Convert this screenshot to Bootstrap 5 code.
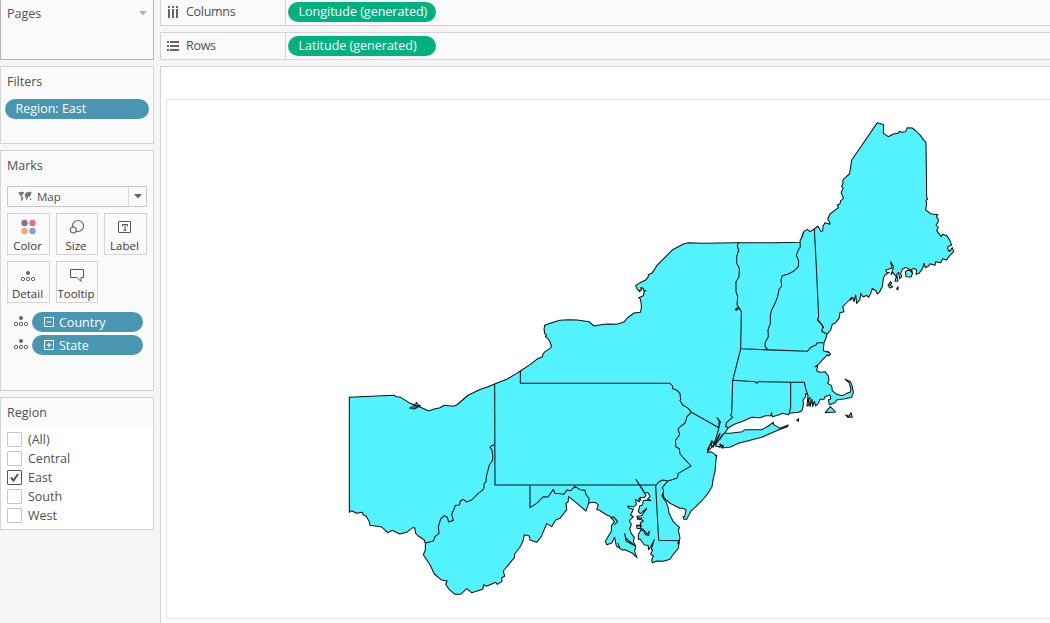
<!DOCTYPE html>
<html lang="en">
<head>
<meta charset="utf-8">
<meta name="viewport" content="width=device-width, initial-scale=1">
<title>Map of the East region</title>
<link href="https://cdn.jsdelivr.net/npm/bootstrap@5.3.0/dist/css/bootstrap.min.css" rel="stylesheet">
<style>
body{font-family:"Open Sans","Liberation Sans",sans-serif;font-size:12.5px;line-height:20px;color:#505050;background:#f5f5f5;width:1050px;height:623px}
.side{width:154px}
.panel{background:#fafafa;border:1px solid #d4d4d4;width:154px}
.panel-title{padding-left:6px;line-height:20px}
.pages{height:60px;border-color:#b4b4b4;border-top:0}
.filters{height:78px}
.marks{height:241px}
.region{height:133px;background:#fff}
.region .panel-title{background:#fafafa;height:29px;padding-top:5px}
.pill{height:20px;border-radius:10px;color:#fff;background:#4996b2;line-height:19px;font-weight:500;white-space:nowrap}
.pill.green{background:#00b180;width:148px;padding-left:10.500px}
.mark-type{margin:0 6px;width:140px;height:21px;border:1px solid #c9c9c9;border-radius:1px;font-size:11.5px;line-height:19px}
.mark-type .arrow{width:18px;height:19px;border-left:1px solid #d9d9d9}
.tiles{display:grid;grid-template-columns:43px 42px 43px;column-gap:6px;row-gap:6px;padding-left:6px}
.tile{height:42px;border:1px solid #d4d4d4;font-size:11.5px;line-height:15px;color:#383838;text-align:center;white-space:nowrap}
.tile svg{display:block;margin:4px auto 0}
.tile span{display:block;margin:0 -3px 0 -5px}
.opt{height:19px;line-height:19px;padding-left:6px}
.box{width:15px;height:15px;border:1px solid #c6c6c6;border-radius:1px;background:#fff}
.box.on{border-color:#555}
.shelf{background:#fafafa;border:1px solid #d4d4d4;border-right:0;height:28px}
.shelf-name{width:125px;border-right:1px solid #d4d4d4;padding-left:6px;letter-spacing:-.3px}
.sheet{background:#fff;border:1px solid #d4d4d4;border-right:0;border-bottom:0;height:557px;padding:32px 0 0 5px}
.view{border:1px solid #e6e6e6;border-right:0;height:520px}
</style>
<script src="https://cdn.jsdelivr.net/npm/bootstrap@5.3.0/dist/js/bootstrap.bundle.min.js"></script>
</head>
<body class="d-flex overflow-hidden">
<svg width="0" height="0" class="position-absolute">
  <symbol id="detail" viewBox="0 0 16 14"><circle cx="8" cy="3" r="2" fill="#666"/><g fill="none" stroke="#666"><circle cx="3" cy="9" r="1.7"/><circle cx="8" cy="9" r="1.7"/><circle cx="13" cy="9" r="1.7"/></g></symbol>
</svg>
<aside class="side d-flex flex-column flex-shrink-0">
  <section class="panel pages d-flex justify-content-between align-items-start pt-1">
    <div class="panel-title">Pages</div>
    <svg width="8" height="5" style="margin:7px 6px 0 0"><path d="M0 0h8L4 4.5z" fill="#b0b0b0"/></svg>
  </section>
  <section class="panel filters" style="margin-top:6px">
    <div class="panel-title" style="padding-top:5px">Filters</div>
    <div class="pill" style="margin:7px 4px 0;padding-left:10.5px">Region: East</div>
  </section>
  <section class="panel marks" style="margin-top:6px">
    <div class="panel-title" style="padding-top:5px">Marks</div>
    <div class="mark-type d-flex align-items-center justify-content-between" style="margin-top:10px">
      <div class="d-flex align-items-center"><svg width="14" height="11" style="margin:0 5px 0 10px"><path d="M0 1.500L3 .8 6 1 5.500 3 4 4l-.5 1.200L5.300 6.500 4.800 8.500 3.800 10.500 3 8 3.200 6 1.500 4.200 1.300 2.700zM7 3L8 1.500 10 1 13.500.8 13.200 3 12.300 5 11.500 6.500 10.500 5 9.800 6.500 9 9 8 8.500 7.800 6.500 6.800 5.500zM12 7.500l1.500.3-.3 1.200H12z" fill="#777"/></svg><span>Map</span></div>
      <div class="arrow d-flex align-items-center justify-content-center"><svg width="8" height="5"><path d="M0 0h8L4 4.5z" fill="#666"/></svg></div>
    </div>
    <div class="tiles" style="margin-top:6px">
      <div class="tile"><svg width="18" height="20"><circle cx="4.500" cy="5" r="3.2" fill="#83709b"/><circle cx="12.500" cy="5" r="3.2" fill="#fb6b80"/><circle cx="4.500" cy="13" r="3.2" fill="#f6a479"/><circle cx="12.500" cy="13" r="3.2" fill="#7ba5cf"/></svg><span>Color</span></div>
      <div class="tile"><svg width="18" height="20" fill="#fafafa" stroke="#666" stroke-width="1.2"><circle cx="10" cy="8" r="5.5"/><circle cx="5.3" cy="12" r="3"/></svg><span>Size</span></div>
      <div class="tile"><svg width="18" height="20" fill="none" stroke="#555"><rect x="1.5" y="3.5" width="12" height="11" rx=".5"/><path d="M5.500 8.500v-2h5v2M8 6.500v6M6.500 12h3"/></svg><span>Label</span></div>
      <div class="tile"><svg width="18" height="20" viewBox="0 0 18 20"><use href="#detail" x="0" y="4" width="16" height="14"/></svg><span>Detail</span></div>
      <div class="tile"><svg width="18" height="20" fill="none" stroke="#555"><path d="M2.500 3.500h13v8h-2.500v4l-4-4H2.500z"/></svg><span>Tooltip</span></div>
    </div>
    <div class="d-flex align-items-center" style="margin:9px 10px 0 12px"><svg width="16" height="14" style="margin-right:3px"><use href="#detail"/></svg><div class="pill d-flex align-items-center flex-grow-1" style="padding-left:12px"><svg width="10" height="10" fill="none" stroke="#fff" style="margin-right:5px"><path d="M.5.500h9v9h-9zM2.500 5h5"/></svg>Country</div></div>
    <div class="d-flex align-items-center" style="margin:3px 10px 0 12px"><svg width="16" height="14" style="margin-right:3px"><use href="#detail"/></svg><div class="pill d-flex align-items-center flex-grow-1" style="padding-left:12px"><svg width="10" height="10" fill="none" stroke="#fff" style="margin-right:5px"><path d="M.5.500h9v9h-9zM2.500 5h5M5 2.500v5"/></svg>State</div></div>
  </section>
  <section class="panel region" style="margin-top:6px">
    <div class="panel-title">Region</div>
    <div style="padding-top:3px">
      <div class="opt d-flex align-items-center gap-2"><i class="box"></i><span style="margin-left:-2px">(All)</span></div>
      <div class="opt d-flex align-items-center gap-2"><i class="box"></i><span style="margin-left:-2px">Central</span></div>
      <div class="opt d-flex align-items-center gap-2"><i class="box on d-flex"><svg width="13" height="13"><path d="M3 6.500l2.500 3L10 3" fill="none" stroke="#555" stroke-width="2"/></svg></i><span style="margin-left:-2px">East</span></div>
      <div class="opt d-flex align-items-center gap-2"><i class="box"></i><span style="margin-left:-2px">South</span></div>
      <div class="opt d-flex align-items-center gap-2"><i class="box"></i><span style="margin-left:-2px">West</span></div>
    </div>
  </section>
</aside>
<main class="flex-grow-1" style="margin-left:6px">
  <div class="shelf d-flex" style="margin-top:-2px">
    <div class="shelf-name d-flex align-items-center"><svg width="12" height="12" fill="#666" style="margin-right:7px"><path d="M1 0h2v2H1zM5 0h2v2H5zM9 0h2v2H9zM1 3h2v9H1zM5 3h2v9H5zM9 3h2v9H9z"/></svg>Columns</div>
    <div class="pill green" style="margin:3px 0 0 2px">Longitude (generated)</div>
  </div>
  <div class="shelf d-flex" style="margin-top:6px">
    <div class="shelf-name d-flex align-items-center"><svg width="12" height="10" fill="#666" style="margin-right:7px"><path d="M0 0h2v2H0zM0 4h2v2H0zM0 8h2v2H0zM3 0h9v2H3zM3 4h9v2H3zM3 8h9v2H3z"/></svg>Rows</div>
    <div class="pill green" style="margin:3px 0 0 2px">Latitude (generated)</div>
  </div>
  <div class="sheet" style="margin-top:6px"><div class="view"><svg id="map" class="d-block" width="883" height="518" viewBox="167 100 883 518" stroke="#101010" stroke-width="1.05" stroke-linejoin="round"></svg></div></div>
</main>
<script>
// Each run of points is [origin x, origin y, "x,y ..."], the points in thirds of a pixel.
const outline = [
 [340,360,"28,112 162,106 170,110 182,112 207,128 222,134 245,143 266,153 280,148 300,143 313,136 340,139 350,135 385,105 400,98 418,89 440,82 464,72 500,58 530,40"],
 [490,230,"91,423 120,404 140,388 157,380 159,372 165,365 183,353 184,348 179,333 170,322 166,321 169,314 163,310 164,304 162,299 164,286 180,280 210,271 235,269 262,270 297,275 305,282 313,288 325,286 342,283 360,282 380,283 392,279 403,275 412,264 432,249 451,247 454,235 454,225 451,207 446,203 460,197 463,185 468,182 462,183 459,174 452,173 455,180 449,181 450,186 443,179 437,167 450,158 468,149 475,140 475,134 485,130 494,118 500,107 548,59 580,42 595,38 640,40 740,38"],
 [720,230,"55,38 165,38 240,37 241,29 247,20 250,7"],
 [800,110,"5,382 10,370 12,364 22,358 30,365 43,357 54,348 62,364 68,363 69,349 75,338 90,343 89,337 83,327 90,312 112,295 115,293 112,285 120,281 122,272 128,268 130,263 124,250 124,245 130,235 125,229 129,220 128,213 133,205 148,192 151,178 155,150 180,114 232,38 251,44 250,70 265,80 280,72 295,70 298,64 304,67 317,65 322,53 337,54 348,63 361,76 370,89 378,97 380,262 383,267 378,271 380,280 377,300 392,311 414,314 409,320 415,328 414,337 408,345 415,352 410,362 424,380 428,373 440,377 448,388 455,405 443,410 444,420 449,424 457,413 461,425 446,440 440,450 428,446 422,458 407,455 405,466 390,461 386,468 376,473 372,460 368,475 357,490 348,493 350,480 342,475 335,478 337,489 330,479 318,472 307,478 302,490 305,500 299,506 296,487 290,493 294,513 285,514 289,500 278,487 273,494 281,470 272,455 276,474 265,478 257,480 262,490 268,487 255,495 250,505 247,530 238,547 232,552 228,543 217,535 213,548 206,562 200,556 190,561 182,550 180,569 170,580 167,555 162,575 158,562 152,571 154,563 148,570 133,585 128,590 132,605 120,608 117,625 105,640 97,643 92,660"],
 [720,230,"321,313 317,327 312,338 310,362"],
 [700,340,"371,32 388,38 384,34 392,42 385,48 381,44 377,50 365,62 357,72 345,80 353,77 350,93 360,97 375,95 385,108 387,120 383,130 395,137 397,152 410,163 428,167 440,160 450,157 453,147 447,128 435,118 452,125 457,140 460,158 455,172 435,176 410,180 405,188 388,194 385,180 392,177 390,165 375,170 372,178 360,178 355,190 347,198 343,184 338,200 336,178 330,200 330,172 325,178 327,195 321,198 324,165 316,161 317,170 309,180 310,195 308,205 305,213 295,217 268,220 265,224 248,220 235,225 217,230 214,218 213,227 197,227 180,233 155,232 130,243 105,252 85,263 72,283 65,286 59,298 51,315 46,313 56,292 60,280 45,308 39,322 33,317 36,307 24,325 22,338 32,335 42,341 50,350"],
 [590,400,"380,165 378,180 375,215 370,235 366,260 354,280 340,297 330,307 318,319 303,333 290,358 282,358 279,350 284,350 288,330 280,325 270,325 256,318 240,310 222,293 218,280 216,288 220,295 228,305 235,325 237,340 250,365 263,378 269,382 265,390 270,415 263,431 268,425 265,445 252,460 240,478 220,484 200,483 187,488 185,480 190,468 182,462 188,450 184,447 193,419 182,440 176,449 174,436 163,435 150,417 145,418 145,404 153,389 163,395 166,404 176,406 178,394 171,402 159,387 141,385 140,375 154,379 151,368 160,363 148,355 143,359 141,349 155,347 170,325 151,341 145,335 149,318 157,315 160,302 171,300 183,302 173,297 180,289 174,278 163,278 138,239 158,268 168,287 162,293 150,292 153,301 147,295 148,306 136,298 139,313 131,321 113,318 115,323 130,328 122,345 130,350 118,362 124,373 119,387 124,400 133,413 130,425 137,438 134,455 141,473 128,460 105,449 97,450 90,445 84,430 90,445 79,438 74,412 65,429 50,434 46,424 64,394 65,376 73,365 62,350 45,342 28,330 20,329 25,314 15,307 0,308"],
 [400,440,"566,190 558,213 532,191 506,170 504,187 498,190 500,209 480,235 467,240 455,260 440,251 434,265 424,290 410,307 390,300 388,288 373,284 370,300 362,318 344,342 343,353 324,376 310,393 314,409 305,413 306,424 292,433 287,427 260,439 251,434 248,448 215,458 200,446 182,463 165,463 147,448 137,433 141,423 123,419 103,402 90,374 70,344 76,330 76,310 73,300 55,288 47,280 44,263 38,263 20,277 0,282"],
 [340,360,"165,515 157,511 143,518 130,505 122,500 90,496 88,485 78,468 69,464 67,457 50,460 35,452 28,457"]
];
const islands = [
 [[700,340,"62,295 72,280 90,280 127,275 135,269 185,269 205,258 220,247 220,253 240,265 265,255 262,260 235,270 185,292 145,302 115,310 92,321 65,324 70,318 60,313 63,321 45,318 52,305"]],
 [[700,340,"376,218 391,200 407,216"]],
 [[700,340,"437,225 447,229 453,218 457,232 443,232"]],
 [[700,340,"290,241 296,236 295,244"]],
 [[800,110,"316,485 328,478 338,490 333,501 318,500"]],
 [[800,110,"264,526 272,515 275,520 270,525 278,530 270,534"]],
 [[800,110,"290,537 294,530 294,539"]],
 [[340,360,"209,144 218,140 233,142 222,147"]],
 [[340,360,"219,134 228,132 229,127 233,134 242,137 231,138"]]
];
const borders = [
 [340,360,"464,72 465,376"],
 [490,230,"91,423 91,460 540,460 548,468 548,476 561,481 570,490 572,510"],
 [400,440,"285,135 767,135"],
 [340,360,"464,254 455,257 450,262 456,270 458,285 458,300 448,315 443,335 439,350 438,365 431,373 433,380 430,388 415,400 395,420 380,426 370,418 361,423 358,435 346,436 341,450 335,463 340,481 326,486 322,472 313,467 302,477 295,500 297,520 285,530 280,543 256,549"],
 [400,440,"390,136 390,203 410,190 430,170 444,171 460,148 465,160 492,163 500,150 512,152 525,139 540,149 555,151 558,164 567,175 566,190"],
 [590,400,"269,0 278,15 295,25 304,37 291,50 285,69 271,80 264,87 269,104 257,120 257,140 268,146 270,162 303,198 265,220 262,234 232,244 216,264 221,270 218,290"],
 [590,400,"304,37 387,83 387,62 381,53 391,65 385,90 379,112 369,137 353,155 365,122 373,130"],
 [590,400,"197,257 206,246 218,240 232,242"],
 [590,400,"197,257 206,421 270,422"],
 [720,230,"55,38 52,48 56,60 50,80 50,100 58,115 57,140 48,155 48,185 53,200 51,225 56,231 46,238 49,241 58,234 64,245 62,356 102,358 262,364 272,352 288,345 292,338 310,338"],
 [720,230,"240,37 241,50 235,60 229,76 236,93 235,110 222,123 205,132 187,137 183,150 185,168 177,178 173,200 167,215 155,240 151,255 151,280 144,300 145,320 136,336 135,350 143,358"],
 [800,110,"43,357 49,470 56,620 52,630 66,644 71,654"],
 [720,230,"293,268 309,290 305,304 321,313"],
 [700,340,"122,27 98,121 95,220 92,226 98,232 80,247 77,259 84,263"],
 [700,340,"98,121 166,125 170,130 175,125 272,127 272,200 268,220"],
 [700,340,"272,127 313,127 318,150 323,163"],
 [590,400,"62,356 70,350 83,364 73,375"],
 [590,400,"104,400 107,414 134,437 129,434 108,423 104,400"],
 [590,400,"142,379 151,373 152,385 143,386"],
 [590,400,"145,352 150,360 156,352"],
 [590,400,"387,143 393,135 400,138 394,142"]
];
const points = runs => runs.flatMap(([x, y, s]) => s.split(" ").map(p => {
  const [a, b] = p.split(",").map(Number);
  return (x + a / 3).toFixed(2) + " " + (y + b / 3).toFixed(2);
})).join("L");
const draw = (d, fill) => {
  const p = document.createElementNS("http://www.w3.org/2000/svg", "path");
  p.setAttribute("d", "M" + d);
  p.setAttribute("fill", fill);
  document.getElementById("map").append(p);
};
draw(points(outline) + "Z", "#52f2ff");
islands.forEach(i => draw(points(i) + "Z", "#52f2ff"));
borders.forEach(b => draw(points([b]), "none"));
</script>
</body>
</html>
